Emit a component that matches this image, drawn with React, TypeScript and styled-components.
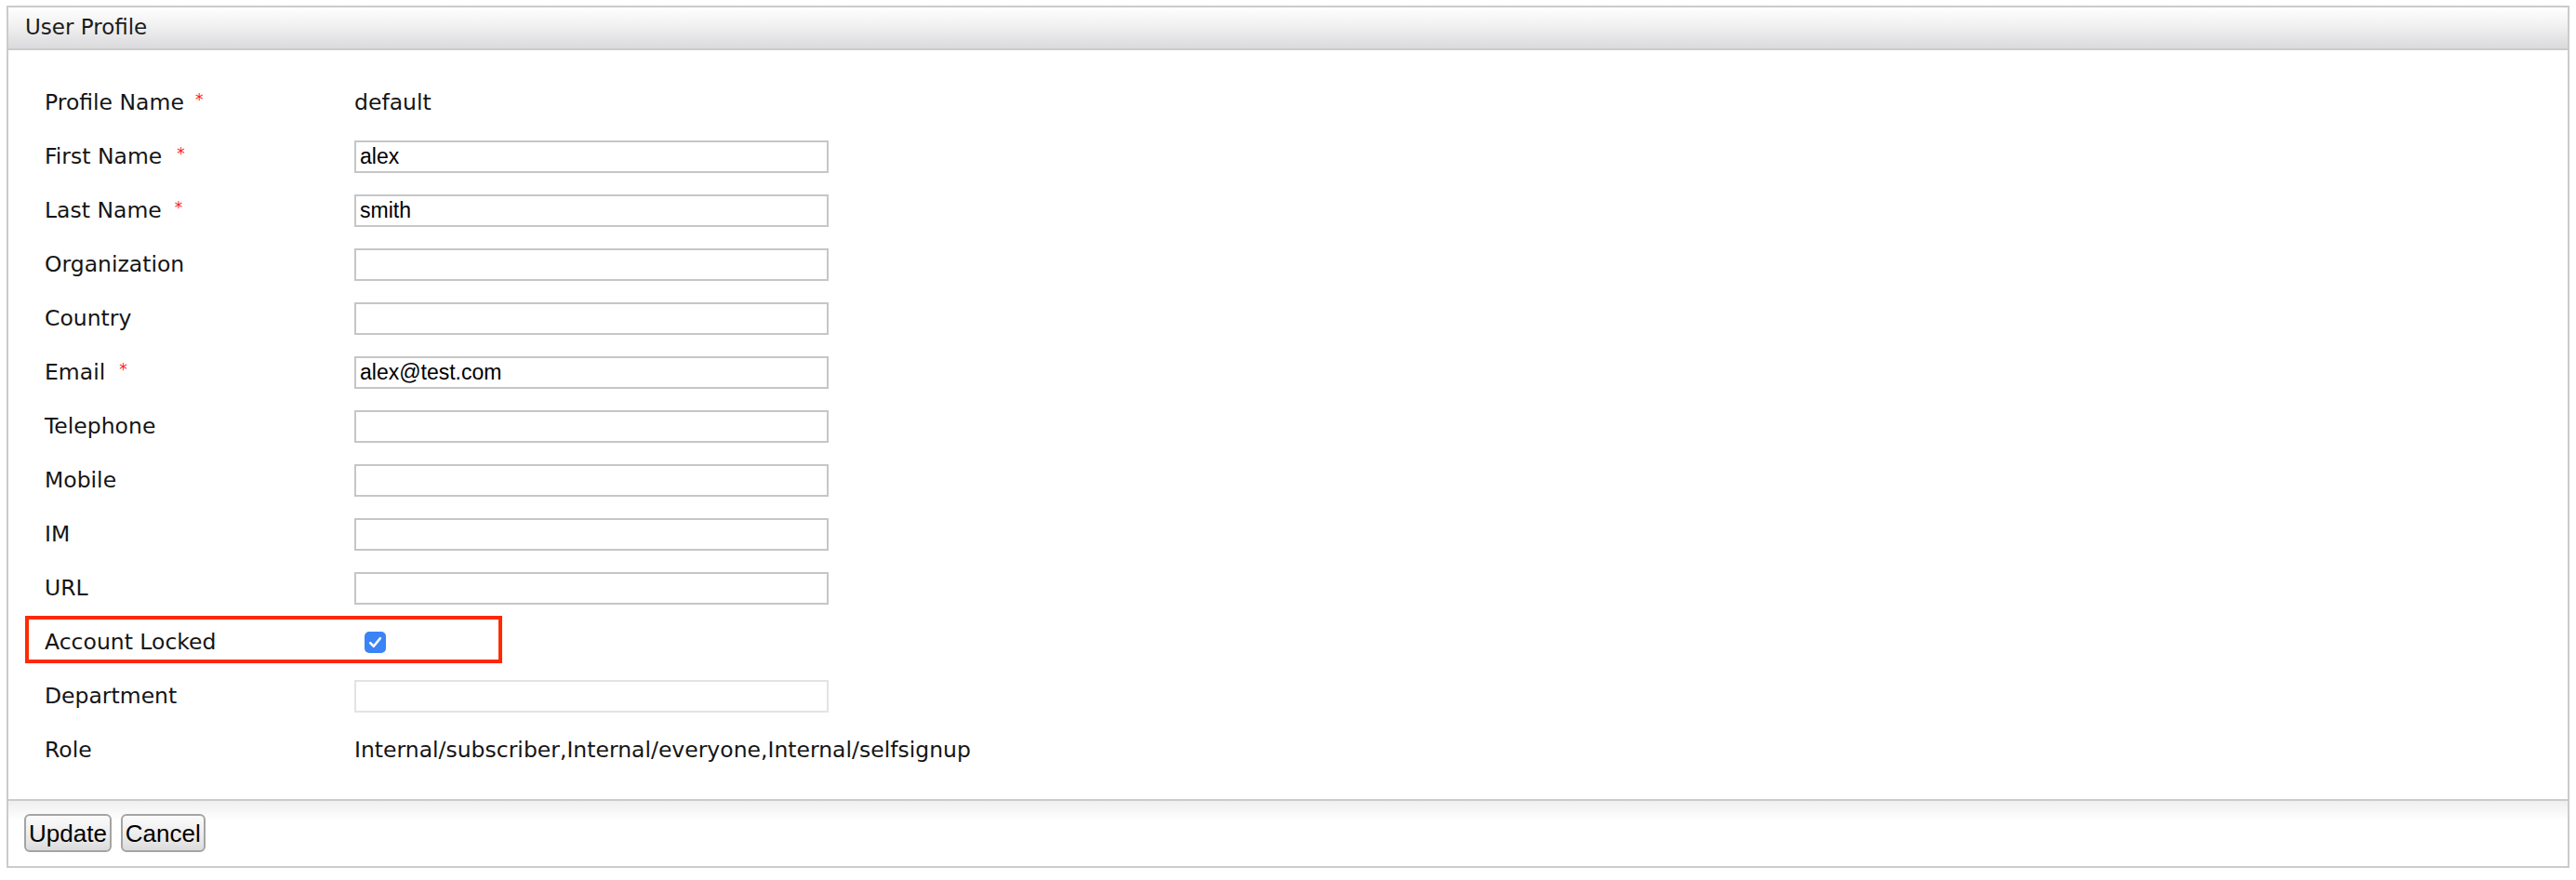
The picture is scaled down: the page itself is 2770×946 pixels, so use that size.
import React from "react";
import styled, { createGlobalStyle } from "styled-components";

const GlobalStyle = createGlobalStyle`
  html, body { margin: 0; padding: 0; background: #ffffff; }
  body { font-family: "DejaVu Sans", "Noto Sans", sans-serif; color: #151515; }
  *, *::before, *::after { box-sizing: border-box; }
`;

const Page = styled.div`
  padding: 6px 7px 0 7px;
`;

const Panel = styled.section`
  border: 2px solid #cbcbcb;
  background: #ffffff;
`;

const PanelHeader = styled.header`
  height: 46px;
  padding: 0 0 0 18px;
  border-bottom: 2px solid #cbcbcb;
  background: linear-gradient(to bottom, #fefefe 0%, #f1f1f2 45%, #dadadc 100%);
  font-family: "DejaVu Sans", sans-serif;
  font-size: 23px;
  line-height: 42px;
  color: #1c1c1c;
`;

const PanelBody = styled.div`
  padding: 27px 0 24px 39px;
`;

const Row = styled.div<{ $highlight?: boolean }>`
  position: relative;
  display: grid;
  grid-template-columns: 333px 1fr;
  align-items: center;
  height: 58px;

  ${(p) =>
    p.$highlight &&
    `
    &::after {
      content: "";
      position: absolute;
      box-sizing: border-box;
      left: -21px;
      top: 1px;
      width: 513px;
      height: 51px;
      border: 4px solid #ff2a00;
      pointer-events: none;
    }
  `}
`;

const Label = styled.div`
  font-family: "DejaVu Sans", sans-serif;
  font-size: 23.5px;
  color: #151515;
  white-space: nowrap;
`;

const Required = styled.span<{ $gap: number }>`
  display: inline-block;
  margin-left: ${(p) => p.$gap}px;
  color: #ff1a1a;
  font-size: 17px;
  vertical-align: 5px;
`;

const Value = styled.div`
  font-family: "DejaVu Sans", sans-serif;
  font-size: 23.5px;
  color: #151515;
  white-space: nowrap;
`;

const TextInput = styled.input<{ $disabledLook?: boolean }>`
  width: 510px;
  height: 35px;
  padding: 0 4px;
  margin: 0;
  border: 2px solid ${(p) => (p.$disabledLook ? "#e3e3e3" : "#c6c6c6")};
  border-radius: 0;
  background: #ffffff;
  font-family: "Liberation Sans", Arial, sans-serif;
  font-size: 23px;
  color: #000000;
  outline: none;
`;

const CheckBox = styled.span`
  display: inline-flex;
  align-items: center;
  justify-content: center;
  width: 23px;
  height: 23px;
  margin-left: 11px;
  border-radius: 5px;
  background: #3b84f6;
`;

const PanelFooter = styled.footer`
  display: flex;
  gap: 10px;
  height: 72px;
  padding: 14px 0 0 17px;
  border-top: 2px solid #cbcbcb;
  background: linear-gradient(to bottom, #efefef 0px, #f8f8f8 12px, #ffffff 22px, #ffffff 100%);
`;

const Button = styled.button`
  height: 41px;
  padding: 0 3px;
  margin: 0;
  border: 2px solid #a4a4a4;
  border-radius: 6px;
  background: linear-gradient(to bottom, #fbfbfb 0%, #eeeeee 50%, #dcdcdc 100%);
  font-family: "Liberation Sans", Arial, sans-serif;
  font-size: 26px;
  line-height: 1;
  color: #000000;
  cursor: pointer;
`;

type Field =
  | { label: string; req?: number; kind: "text"; value: string }
  | { label: string; req?: number; kind: "input"; value: string; muted?: boolean }
  | { label: string; req?: number; kind: "check"; highlight?: boolean };

const fields: Field[] = [
  { label: "Profile Name", req: 12, kind: "text", value: "default" },
  { label: "First Name", req: 16, kind: "input", value: "alex" },
  { label: "Last Name", req: 14, kind: "input", value: "smith" },
  { label: "Organization", kind: "input", value: "" },
  { label: "Country", kind: "input", value: "" },
  { label: "Email", req: 15, kind: "input", value: "alex@test.com" },
  { label: "Telephone", kind: "input", value: "" },
  { label: "Mobile", kind: "input", value: "" },
  { label: "IM", kind: "input", value: "" },
  { label: "URL", kind: "input", value: "" },
  { label: "Account Locked", kind: "check", highlight: true },
  { label: "Department", kind: "input", value: "", muted: true },
  { label: "Role", kind: "text", value: "Internal/subscriber,Internal/everyone,Internal/selfsignup" },
];

function CheckMark() {
  return (
    <svg width="15" height="13" viewBox="0 0 15 13" fill="none">
      <path d="M2.2 7.2 L5.8 10.8 L12.8 2.2" stroke="#ffffff" strokeWidth="2.6" strokeLinecap="round" strokeLinejoin="round" />
    </svg>
  );
}

export default function App() {
  return (
    <>
      <GlobalStyle />
      <Page>
        <Panel>
          <PanelHeader>User Profile</PanelHeader>
          <PanelBody>
            {fields.map((f) => (
              <Row key={f.label} $highlight={f.kind === "check" && f.highlight}>
                <Label>
                  {f.label}
                  {f.req ? <Required $gap={f.req}>*</Required> : null}
                </Label>
                {f.kind === "text" && <Value>{f.value}</Value>}
                {f.kind === "input" && (
                  <div>
                    <TextInput type="text" defaultValue={f.value} $disabledLook={f.muted} readOnly={f.muted} />
                  </div>
                )}
                {f.kind === "check" && (
                  <div>
                    <CheckBox role="checkbox" aria-checked="true">
                      <CheckMark />
                    </CheckBox>
                  </div>
                )}
              </Row>
            ))}
          </PanelBody>
          <PanelFooter>
            <Button type="button">Update</Button>
            <Button type="button">Cancel</Button>
          </PanelFooter>
        </Panel>
      </Page>
    </>
  );
}
